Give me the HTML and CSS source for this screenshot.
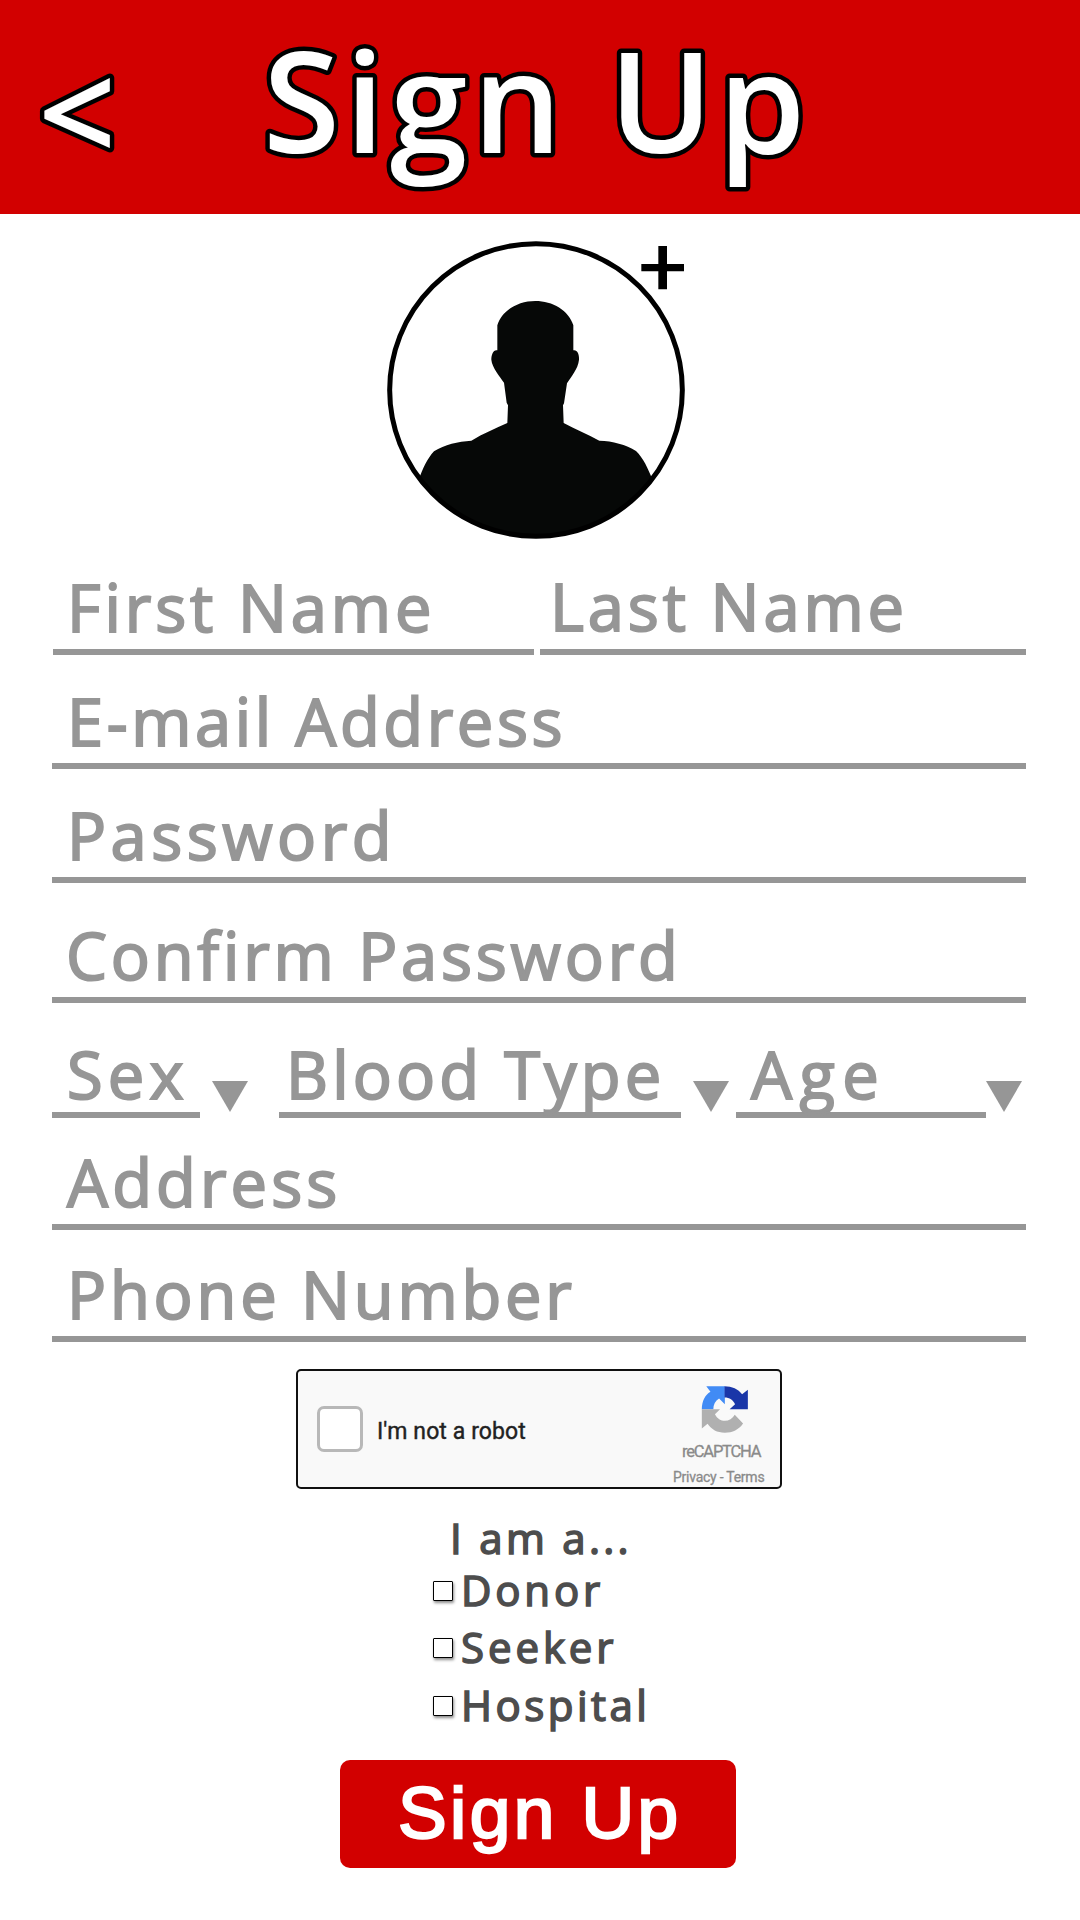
FILE: index.html
```html
<!DOCTYPE html>
<html lang="en">
<head>
<meta charset="utf-8">
<title>Sign Up</title>
<link rel="stylesheet" href="styles.css">
</head>
<body>
<header class="topbar">
  <svg class="back" viewBox="0 0 222 214"><text x="38" y="163">&lt;</text></svg>
  <svg class="title" viewBox="0 0 640 214"><text x="41" y="153">Sign Up</text></svg>
</header>
<main class="page">
  <svg class="avatar" viewBox="0 0 1020 933">
    <defs><clipPath id="disc"><circle cx="498" cy="480" r="440"/></clipPath></defs>
    <path clip-path="url(#disc)" fill="#060807" d="M382 286C396 241 444 213 496 213C548 213 596 241 610 286V361C622 358 628 374 627 389C624 418 602 441 591 460L582 520L579 526L581 579C616 598 652 612 688 632C728 633 768 644 798 663C820 684 834 716 848 750V933H146V750C158 716 172 686 192 664C224 644 264 634 304 632C340 610 376 596 412 579L414 526L410 518L402 458C390 441 366 412 364 389C364 374 370 358 382 361Z"/>
    <circle cx="498" cy="480" r="439" fill="none" stroke="#000" stroke-width="15"/>
    <path fill="#000" d="M865 48h26v54h51v22h-51v54h-26v-54h-51v-22h51z"/>
  </svg>
  <form class="fields">
    <div class="row names">
      <label class="field first">First Name</label>
      <label class="field last">Last Name</label>
    </div>
    <label class="field email">E-mail Address</label>
    <label class="field password">Password</label>
    <label class="field confirm">Confirm Password</label>
    <div class="row selects">
      <label class="field sex">Sex</label>
      <svg class="arrow arrow-sex" viewBox="0 0 36 31"><path d="M0 0H36L18 31Z"/></svg>
      <label class="field blood">Blood Type</label>
      <svg class="arrow arrow-blood" viewBox="0 0 36 31"><path d="M0 0H36L18 31Z"/></svg>
      <label class="field age">Age</label>
      <svg class="arrow" viewBox="0 0 36 31"><path d="M0 0H36L18 31Z"/></svg>
    </div>
    <label class="field address">Address</label>
    <label class="field phone">Phone Number</label>
  </form>
  <section class="captcha">
    <span class="captcha-box"></span>
    <span class="captcha-label">I'm not a robot</span>
    <div class="brand">
      <svg class="brand-icon" viewBox="45 36 147 147">
        <path fill="#418bf5" d="M46 109C46 84 56 64 73 54L60 37H118V93L100 75C88 82 82 94 82 109Z"/>
        <path fill="#1a36a8" d="M117 37C140 37 160 46 172 62L190 48V109H133L150 93C144 80 133 72 117 72Z"/>
        <path fill="#b0b0b0" d="M46 109H103L87 124C94 138 106 145 118 145C131 145 142 138 149 126L175 153C162 172 142 182 118 182C94 182 76 172 64 154L46 169Z"/>
      </svg>
      <span class="brand-name">reCAPTCHA</span>
      <span class="brand-links">Privacy - Terms</span>
    </div>
  </section>
  <section class="roles">
    <p class="ask">I am a...</p>
    <label class="role donor"><i class="tick"></i>Donor</label>
    <label class="role seeker"><i class="tick"></i>Seeker</label>
    <label class="role hospital"><i class="tick"></i>Hospital</label>
  </section>
  <button class="submit">Sign Up</button>
</main>
</body>
</html>
```
FILE: styles.css
```css
* { box-sizing: border-box; }
body {
  margin: 0;
  width: 1080px;
  height: 1920px;
  background: #fff;
  font-family: "Open Sans", "Noto Sans", sans-serif;
}
.topbar {
  display: flex;
  height: 214px;
  background: #d20000;
  font-weight: 600;
  fill: #fff;
  stroke: #000;
  stroke-width: 9px;
  stroke-linejoin: round;
  paint-order: stroke fill;
}
.back {
  width: 222px;
  height: 214px;
  font-size: 137px;
}
.title {
  width: 640px;
  height: 214px;
  font-size: 140px;
  letter-spacing: 5.4px;
}
.page {
  display: flex;
  flex-direction: column;
}
.avatar {
  width: 340px;
  height: 311px;
  margin: 16px 0 0 370px;
}
.fields {
  display: grid;
  grid-template-rows: 114px 114px 114px 120px 115px 112px 112px;
  width: 974px;
  margin-left: 52px;
  color: #969696;
  font-size: 65px;
  line-height: 60px;
  -webkit-text-stroke: 2px #969696;
}
.row { display: flex; align-items: flex-end; }
.field {
  align-self: end;
  border-bottom: 6px solid #969696;
  padding: 0 0 12px 15px;
  white-space: nowrap;
}
.names { gap: 6px; padding-left: 1px; }
.first { width: 481px; padding-left: 14px; letter-spacing: 3.9px; }
.last { width: 486px; padding-left: 10px; padding-bottom: 13px; letter-spacing: 3.9px; }
.email { letter-spacing: 3.6px; }
.password { letter-spacing: 4.5px; }
.confirm { padding-left: 14px; letter-spacing: 3.8px; }
.selects .field { padding-bottom: 8px; }
.sex { width: 148px; letter-spacing: 5.2px; }
.blood { width: 402px; padding-left: 7px; letter-spacing: 4.15px; }
.age { width: 250px; letter-spacing: 7.4px; }
.address { letter-spacing: 4.1px; }
.phone { letter-spacing: 3.8px; }
.arrow {
  width: 36px;
  height: 31px;
  margin-bottom: 6px;
  fill: #969696;
}
.arrow-sex { margin-left: 12px; margin-right: 31px; }
.arrow-blood { margin-left: 12px; margin-right: 7px; }

.captcha {
  display: flex;
  width: 486px;
  height: 120px;
  margin: 27px 0 0 296px;
  padding: 0 16px 0 19px;
  border: 2px solid #111;
  border-radius: 5px;
  background: #f9f9f9;
  font-family: Roboto, sans-serif;
}
.captcha-box {
  width: 46px;
  height: 46px;
  margin-top: 35px;
  border: 3px solid #b8b8b8;
  border-radius: 7px;
  background: #fff;
}
.captcha-label {
  margin: 46px auto 0 14px;
  color: #222;
  font-size: 23px;
  line-height: 30px;
  letter-spacing: .1px;
  -webkit-text-stroke: .4px #222;
}
.brand {
  display: flex;
  flex-direction: column;
  width: 91px;
  padding-top: 15px;
  color: #8a8a8a;
  white-space: nowrap;
  -webkit-text-stroke: .3px #8a8a8a;
}
.brand-icon { width: 50px; height: 50px; margin-left: 27px; }
.brand-name {
  margin: 7px 0 0 9px;
  font-size: 16.5px;
  line-height: 24px;
  letter-spacing: -1.2px;
}
.brand-links { margin-top: 3px; font-size: 14px; line-height: 20px; letter-spacing: -.25px; }

.roles {
  display: grid;
  grid-template-rows: 52px 57px 58px 57px;
  width: 240px;
  margin: 21px 0 0 433px;
  color: #4d4d4d;
  font-size: 42px;
  line-height: 56px;
  -webkit-text-stroke: 1.6px #4d4d4d;
}
.ask { margin: 0 0 0 17px; letter-spacing: 3.3px; }
.role { display: flex; gap: 8px; }
.donor { letter-spacing: 3.8px; }
.seeker { letter-spacing: 3.9px; }
.hospital { letter-spacing: 3.5px; }
.tick {
  width: 20px;
  height: 20px;
  margin-top: 19px;
  border: 1px solid #000;
  border-radius: 1px;
  background: #fff;
  box-shadow: 1px 2px 3px rgba(0, 0, 0, .45);
}
.submit {
  width: 396px;
  height: 108px;
  margin: 26px 0 0 340px;
  padding: 0 0 3px 58px;
  border: 0;
  border-radius: 10px;
  background: #d20000;
  color: #fff;
  font: 73px/103px "Liberation Sans", Arial, sans-serif;
  letter-spacing: 3.4px;
  text-align: left;
  -webkit-text-stroke: 2.4px #fff;
}
```
